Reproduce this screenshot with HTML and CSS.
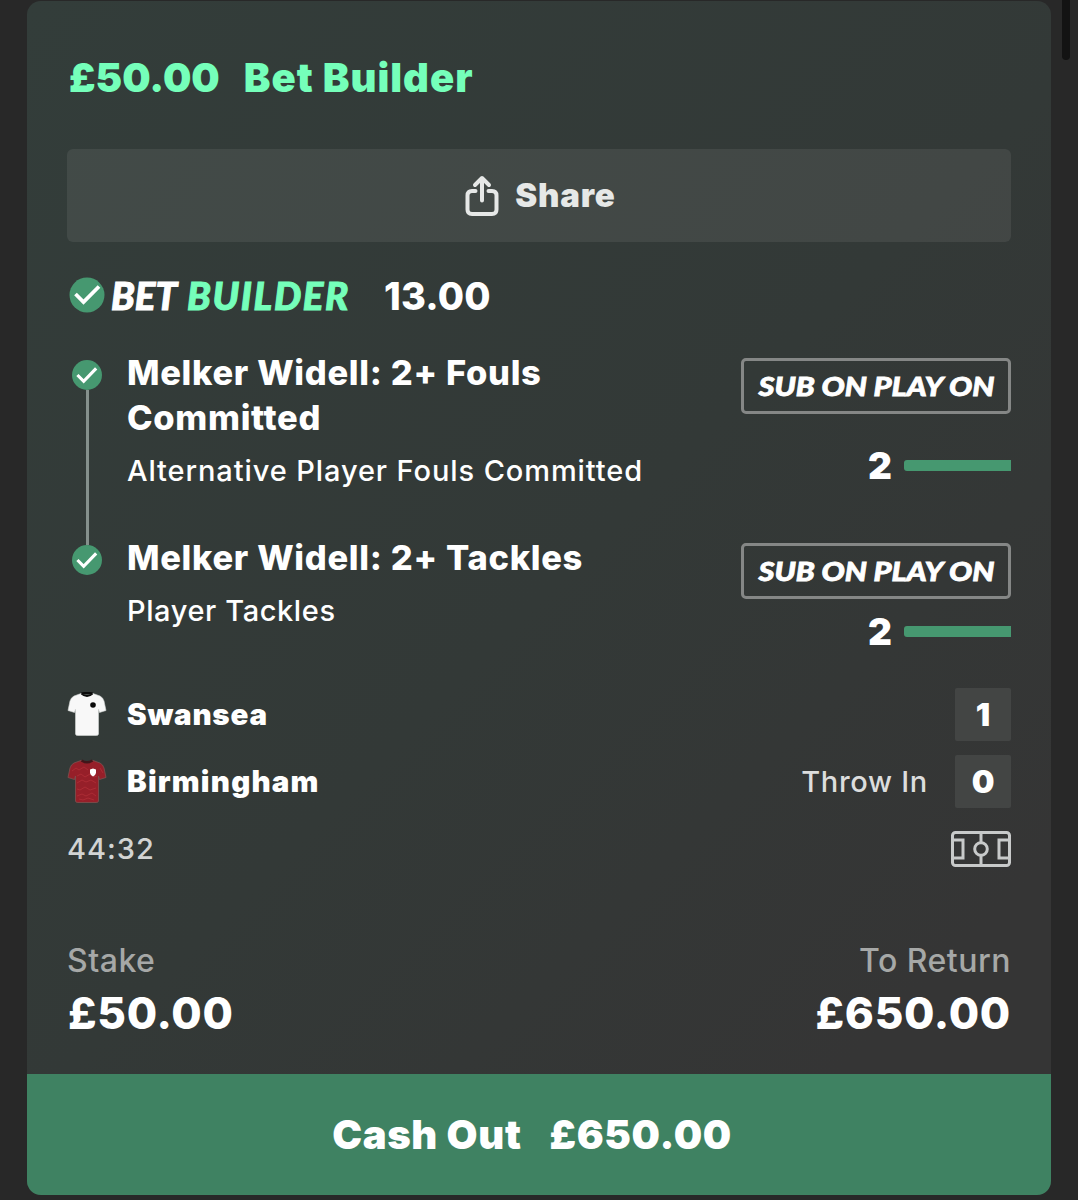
FILE: index.html
```
<!DOCTYPE html>
<html lang="en">

<head>
    <meta charset="UTF-8">
    <meta name="viewport" content="width=device-width, initial-scale=1.0">
    <title>Bet Builder</title>
    <link rel="stylesheet" href="styles.css">
</head>

<body>
    <div class="scrollbar"></div>

    <div class="bet-card">
        <div class="bet-body">
            <div class="bet-header">
                <span class="header-stake">£50.00</span>
                <span class="header-type">Bet Builder</span>
            </div>

            <button class="share-btn">
                <svg class="share-icon" width="34" height="42" viewBox="0 0 34 42">
                    <path d="M10.500 16H7q-4.500 0-4.500 4.500V34.500q0 4.500 4.500 4.500h20q4.500 0 4.500-4.500V20.500q0-4.500-4.500-4.500H23.500M17 25.500V3.500M10 10L17 3L24 10" />
                </svg>
                <span class="share-text">Share</span>
            </button>

            <div class="builder-row">
                <svg class="check" width="36" height="36" viewBox="0 0 36 36">
                    <circle cx="18" cy="18" r="17.500" />
                    <path d="M6.500 17L14.500 25L30 9.500" />
                </svg>
                <span class="logo">
                    <span class="logo-bet">BET</span>
                    <span class="logo-builder">BUILDER</span>
                </span>
                <span class="odds">13.00</span>
            </div>

            <div class="legs">
                <div class="leg leg-tall">
                    <div class="timeline">
                        <svg class="check" width="30" height="30" viewBox="0 0 36 36">
                            <circle cx="18" cy="18" r="18" />
                            <path d="M6.500 18L14 25.500L29 10" />
                        </svg>
                        <div class="timeline-line"></div>
                    </div>
                    <div class="leg-info">
                        <div class="leg-title">Melker Widell: 2+ Fouls<br>Committed</div>
                        <div class="leg-market">Alternative Player Fouls Committed</div>
                    </div>
                    <div class="leg-side">
                        <div class="sub-badge"><span>SUB ON PLAY ON</span></div>
                        <div class="progress"><span>2</span><div class="progress-bar"></div></div>
                    </div>
                </div>

                <div class="leg">
                    <div class="timeline">
                        <svg class="check" width="30" height="30" viewBox="0 0 36 36">
                            <circle cx="18" cy="18" r="18" />
                            <path d="M6.500 18L14 25.500L29 10" />
                        </svg>
                    </div>
                    <div class="leg-info">
                        <div class="leg-title">Melker Widell: 2+ Tackles</div>
                        <div class="leg-market market-short">Player Tackles</div>
                    </div>
                    <div class="leg-side">
                        <div class="sub-badge"><span>SUB ON PLAY ON</span></div>
                        <div class="progress"><span>2</span><div class="progress-bar"></div></div>
                    </div>
                </div>
            </div>

            <div class="teams">
                <div class="team">
                    <svg class="shirt" width="40" height="44" viewBox="0 0 40 44">
                        <path fill="#f8f8f8" stroke="#d5d8d7" stroke-width=".6" d="M14 1.500Q20 5 26 1.500L33 4Q36 5.500 37 9L39 18.500L32.500 20.500L31.500 17V42Q31.500 43.500 29 43.500H11Q8.500 43.500 8.500 42V17L7.500 20.500L1 18.500L3 9Q4 5.500 7 4Z" />
                        <path fill="none" stroke="#0a0a0a" stroke-width="2" d="M14.500 1.500Q20 6.500 25.500 1.500M14.500 1.300Q20 .500 25.500 1.300" />
                        <circle cx="26" cy="13" r="2.800" fill="#0a0a0a" />
                    </svg>
                    <span class="team-name">Swansea</span>
                    <span class="score">1</span>
                </div>
                <div class="team">
                    <svg class="shirt" width="40" height="44" viewBox="0 0 40 44">
                        <path fill="#961f29" stroke="#80504f" stroke-width=".8" d="M14 1.500Q20 5 26 1.500L33 4Q36 5.500 37 9L39 18.500L32.500 20.500L31.500 17V42Q31.500 43.500 29 43.500H11Q8.500 43.500 8.500 42V17L7.500 20.500L1 18.500L3 9Q4 5.500 7 4Z" />
                        <path fill="none" stroke="#b5303a" stroke-width=".7" d="M5 12l4-3 3 2 5-3 4 3M10 17l4-2 4 3 5-3 4 3 3-1M10 24l5-3 4 2 5-2 5 3M10 30l3 1 5-3 5 3 6-2M10 37l5-2 4 2 6-3 4 3M33 9l3 5M12 40l4 1 5-2 6 2" />
                        <path fill="none" stroke="#41161a" stroke-width="2.500" d="M14.500 1.500Q20 5 25.500 1.500" />
                        <path fill="#fff" d="M23 10.500l3-1 3 1v3.500q-.5 2.500-3 3.500q-2.500-1-3-3.500Z" />
                    </svg>
                    <span class="team-name name-away">Birmingham</span>
                    <span class="event">Throw In</span>
                    <span class="score">0</span>
                </div>
            </div>

            <div class="match-row">
                <span class="clock">44:32</span>
                <svg class="pitch" width="60" height="36" viewBox="0 0 60 36">
                    <rect x="1.500" y="1.500" width="57" height="33" rx="3" />
                    <path d="M2 9H12V27H2M58 9H48V27H58M30 2V11.500M30 24.500V34" />
                    <circle cx="30" cy="18" r="6.300" />
                </svg>
            </div>

            <div class="totals">
                <div class="total">
                    <span class="total-label">Stake</span>
                    <span class="total-value">£50.00</span>
                </div>
                <div class="total total-right">
                    <span class="total-label">To Return</span>
                    <span class="total-value">£650.00</span>
                </div>
            </div>
        </div>

        <button class="cashout-btn">
            <span class="cashout-text">Cash Out</span>
            <span class="cashout-amount">£650.00</span>
        </button>
    </div>
</body>

</html>
```
FILE: styles.css
```
* {
    box-sizing: border-box;
}

body {
    margin: 0;
    height: 1200px;
    padding: 1px 27px 0;
    overflow: hidden;
    background-color: #282828;
    color: #fff;
    font-family: Inter, "Liberation Sans", sans-serif;
}

button {
    border: none;
    color: inherit;
    font-family: inherit;
    cursor: pointer;
}

span {
    white-space: nowrap;
}

/* overlay scroll thumb in the page corner */
.scrollbar {
    position: absolute;
    top: 0;
    right: 8px;
    width: 8px;
    height: 60px;
    border-radius: 0 0 4px 4px;
    background-color: #131313;
}

.bet-card {
    width: 1024px;
    height: 1194px;
    border-radius: 14px;
    overflow: hidden;
    background: linear-gradient(135deg, #333d3a 0%, #333937 50%, #353535 85%);
}

.bet-body {
    height: 1073px;
    padding: 0 40px;
}

.bet-header {
    display: flex;
    gap: 24px;
    height: 148px;
    padding: 52px 0 0 2px;
    color: #75ffba;
    font-size: 40px;
    font-weight: 900;
    line-height: 50px;
}

.header-type {
    letter-spacing: 1px;
}

.share-btn {
    display: flex;
    align-items: center;
    justify-content: center;
    gap: 16px;
    width: 100%;
    height: 93px;
    padding: 0;
    border-radius: 6px;
    background-color: rgba(255, 255, 255, 0.075);
    color: #e6e8e7;
    font-size: 33px;
    font-weight: 900;
}

.share-text {
    margin-right: -3px;
    padding-bottom: 1px;
    letter-spacing: 0.8px;
}

.share-icon {
    fill: none;
    stroke: #e6e8e7;
    stroke-width: 4;
    stroke-linecap: round;
    stroke-linejoin: round;
}

.builder-row {
    display: flex;
    align-items: center;
    height: 106px;
    margin-bottom: 2px;
    padding-left: 2px;
}

.check circle {
    fill: #469870;
}

.check path {
    fill: none;
    stroke: #fff;
    stroke-width: 3.8;
}

.logo {
    display: flex;
    gap: 10px;
    width: 279px;
    padding-left: 6px;
    font-family: Lato, sans-serif;
    font-size: 38.5px;
    font-style: italic;
    font-weight: 900;
    -webkit-text-stroke: 1px currentColor;
}

.logo-builder {
    color: #75ffba;
    letter-spacing: 1.6px;
}

.odds {
    padding-top: 2px;
    font-size: 38px;
    font-weight: 800;
    letter-spacing: 0.2px;
}

.leg {
    display: flex;
    height: 150px;
}

.leg-tall {
    height: 185px;
}

.timeline {
    display: flex;
    flex-direction: column;
    align-items: center;
    width: 40px;
    padding-top: 10px;
}

.timeline .check {
    flex: none;
}

.timeline-line {
    flex: 1;
    width: 3px;
    margin-bottom: -10px;
    background-color: #85908c;
}

.leg-info {
    flex: 1;
    padding-left: 20px;
}

.leg-title {
    font-size: 34.5px;
    font-weight: 800;
    line-height: 45px;
    letter-spacing: 0.67px;
}

.leg-market {
    margin-top: 13px;
    font-size: 29px;
    font-weight: 500;
    line-height: 36px;
    letter-spacing: 0.9px;
}

.market-short {
    letter-spacing: 0.6px;
}

.leg-side {
    display: flex;
    flex-direction: column;
    align-items: flex-end;
    padding-top: 8px;
}

.sub-badge {
    display: flex;
    align-items: center;
    justify-content: center;
    width: 270px;
    height: 56px;
    padding-bottom: 1px;
    border: 3px solid #858786;
    border-radius: 5px;
    font-family: Lato, sans-serif;
    font-size: 27px;
    font-style: italic;
    font-weight: 900;
    -webkit-text-stroke: 0.8px currentColor;
}

/* the badge face is wider than the regular italic */
.sub-badge span {
    transform: scaleX(1.14);
}

.progress {
    display: flex;
    align-items: center;
    gap: 12px;
    height: 44px;
    margin-top: 10px;
    font-size: 37px;
    font-weight: 900;
}

.leg-tall .progress {
    margin-top: 29px;
}

.progress-bar {
    width: 107px;
    height: 11px;
    border-radius: 3px 0 0 3px;
    background-color: #469870;
}

.teams {
    display: flex;
    flex-direction: column;
    gap: 14px;
    padding-top: 3px;
}

.team {
    display: flex;
    align-items: center;
    height: 53px;
}

.shirt {
    margin-top: -2px;
}

.team-name {
    flex: 1;
    padding: 0 0 2px 20px;
    font-size: 29.5px;
    font-weight: 900;
    letter-spacing: 0.8px;
}

.name-away {
    letter-spacing: 1.2px;
}

.event {
    margin-right: 27px;
    color: #dcdddd;
    font-size: 29px;
    font-weight: 500;
    letter-spacing: 0.7px;
}

.score {
    width: 56px;
    height: 53px;
    border-radius: 2px;
    background-color: #434544;
    font-size: 32px;
    font-weight: 900;
    line-height: 53px;
    text-align: center;
}

.match-row {
    display: flex;
    align-items: center;
    justify-content: space-between;
    height: 80px;
}

.clock {
    color: #d2d4d3;
    font-size: 29px;
    font-weight: 500;
    letter-spacing: 1px;
}

.pitch {
    margin-top: 2px;
    fill: none;
    stroke: #c8caca;
    stroke-width: 3;
}

.totals {
    display: flex;
    justify-content: space-between;
    padding-top: 53px;
}

.total {
    display: flex;
    flex-direction: column;
}

.total-right {
    align-items: flex-end;
}

.total-label {
    color: #a6a8a7;
    font-size: 32px;
    font-weight: 500;
    line-height: 40px;
    letter-spacing: 0.5px;
}

.total-value {
    padding-left: 1px;
    font-size: 44px;
    font-weight: 800;
    line-height: 64px;
    letter-spacing: 0.7px;
}

.cashout-btn {
    display: flex;
    align-items: center;
    justify-content: center;
    gap: 28px;
    width: 100%;
    height: 121px;
    padding: 0 14px 1px 0;
    background-color: #3f8262;
    font-size: 40px;
    font-weight: 900;
    letter-spacing: 0.65px;
}
```
